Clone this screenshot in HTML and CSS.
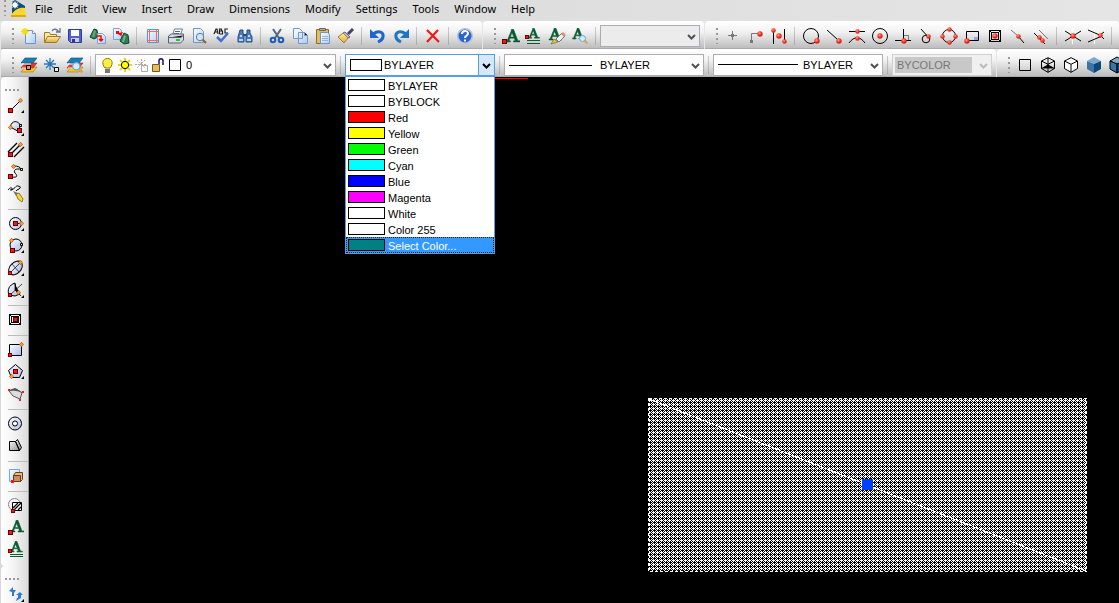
FILE: index.html
```html
<!DOCTYPE html>
<html lang="en">
<head>
<meta charset="utf-8">
<title>CAD drawing</title>
<link rel="stylesheet" href="styles.css">
</head>
<body>
<svg class="defs" aria-hidden="true">
  <defs>
    <radialGradient id="gBall" cx=".4" cy=".35"><stop offset="0" stop-color="#ffb0a0"/><stop offset=".5" stop-color="#ff4b3a"/><stop offset="1" stop-color="#e02010"/></radialGradient>
    <linearGradient id="gBlue" x2="1" y2="1"><stop offset="0" stop-color="#fff"/><stop offset="1" stop-color="#a9bbe8"/></linearGradient>
    <linearGradient id="gPage" x2="1" y2="1"><stop offset="0" stop-color="#fff"/><stop offset="1" stop-color="#a8cdf5"/></linearGradient>
    <linearGradient id="gGold" x2="0" y2="1"><stop offset="0" stop-color="#ffedab"/><stop offset="1" stop-color="#e3a73a"/></linearGradient>
    <linearGradient id="gGrey" x2="1" y2="1"><stop offset="0" stop-color="#fff"/><stop offset="1" stop-color="#888"/></linearGradient>
    <symbol id="ball" viewBox="0 0 6 6"><circle cx="3" cy="3" r="2.7" fill="url(#gBall)"/></symbol>
    <symbol id="node" viewBox="0 0 5 5"><path fill="#600" d="M0 0h5v5H0z"/><path fill="#f01818" d="M1 1h3v3H1z"/></symbol>
    <symbol id="gem" viewBox="0 0 5 5"><path fill="#ff9a2e" stroke="#8a4a00" stroke-width=".6" d="M2.500.3 4.700 2.500 2.500 4.700.3 2.500z"/></symbol>
    <symbol id="more" viewBox="0 0 4 4"><path d="M4 0v4H0z"/></symbol>
    <symbol id="letter" viewBox="0 0 14 13"><path fill="#075c30" stroke="#075c30" stroke-width=".5" d="M6 .3h2l4 10.700h2v1H8v-1h1.500L8.800 8.500H4.500L3.700 11H5v1H1v-1h1L5.700 2zM6.500 3.500 5 7.500h3.300z"/></symbol>
    <symbol id="lens" viewBox="0 0 9 9"><path stroke="#e69a50" stroke-width="2" d="m5.500 5.500 3 3"/><circle cx="3.500" cy="3.500" r="3" fill="#d3edff" stroke="#6da6d9"/></symbol>
    <symbol id="cube" viewBox="0 0 16 16"><path d="M8 .7 14.500 4v7.500L8 15.300 1.500 11.500V4z"/><path d="M1.500 4 8 7.300 14.500 4M8 7.300v8"/></symbol>
    <symbol id="caret" viewBox="0 0 9 6"><path fill="none" stroke="currentColor" stroke-width="2" d="m1 1 3.500 3.500L8 1"/></symbol>
    <symbol id="layers" viewBox="0 0 18 18"><path fill="#f3c623" stroke="#9a7a00" stroke-width=".6" d="M5 11h12l-4 5H1z"/><path fill="#e33" stroke="#922" stroke-width=".6" d="M5 7h12l-4 5H1z"/><path fill="#1580b5" stroke="#0b4a70" stroke-width=".6" d="M5 2h12l-4 5H1z"/><path stroke="#fff" d="M2 8h9M2 12h8"/></symbol>
  </defs>
</svg>

<nav class="menu" aria-label="Main menu">
  <span class="grip"></span>
  <svg class="logo" viewBox="0 0 17 18"><path fill="#0c4d7d" d="M2 2 5 0l10 6v8H2z"/><path fill="#fff" d="m5 1 1 2 2-1-1 2 2 1-2 1 1 2-2-1-1 2-1-2-2 1 1-2-2-1 2-1-1-2 2 1z"/><path fill="#ffd52e" d="M1 15C5 9 10 7 15 8l1 9H1z"/><path fill="#e6a700" d="M1 15h15v2H1z"/></svg>
  <button>File</button><button>Edit</button><button>View</button><button>Insert</button><button>Draw</button><button>Dimensions</button><button>Modify</button><button>Settings</button><button>Tools</button><button>Window</button><button>Help</button>
</nav>

<div class="bars">
  <div class="toolbar" role="toolbar" aria-label="Standard">
    <span class="grip"></span>
    <button class="tool" aria-label="New"><svg viewBox="0 0 18 18"><path fill="url(#gPage)" stroke="#6d94ce" d="M5.500 3.500h7l3 3v10h-10z"/><path fill="#fff" stroke="#6d94ce" d="M12.500 3.500v3h3"/><path stroke="#f3df00" stroke-width="1.500" d="M5 1v7M1 4.500h8M2.500 2l5 5m0-5-5 5"/></svg></button>
    <button class="tool" aria-label="Open"><svg viewBox="0 0 18 18"><path fill="#ffe9a0" stroke="#a07a2c" d="M1.500 15.500v-10h5l1 2h6v3"/><path fill="url(#gGold)" stroke="#a07a2c" d="m1.500 15.500 3-6h13l-4 6z"/><path fill="none" stroke="#64748c" stroke-width="1.300" d="M9 4c2-3 5-2 7 1M17 1v4h-4"/></svg></button>
    <button class="tool" aria-label="Save"><svg viewBox="0 0 18 18"><path fill="#5060d0" stroke="#2d3aa0" d="M2.500 2.500h13v13h-11l-2-2z"/><path fill="#fff" d="M5 3h8v6H5z"/><path fill="#c7cbef" d="M5 11h8v4H5z"/><path fill="#29368e" d="M6 12h3v3H6z"/></svg></button>
    <button class="tool" aria-label="Import"><svg viewBox="0 0 18 18"><path fill="#2d8050" stroke="#0b4528" d="m1 10 4-8 3 1 1 7-4 2z"/><path fill="#66a57e" d="m5 3 2 1-2 6H3z"/><path fill="url(#gPage)" stroke="#7ba2d8" d="M8.500 6.500h5l3 3v7h-8z"/><path stroke="#f00" fill="none" stroke-width="1.500" d="M7 9h5v5m-2-2 2 2 2-2"/></svg></button>
    <button class="tool" aria-label="Export"><svg viewBox="0 0 18 18"><path fill="url(#gPage)" stroke="#7ba2d8" d="M1.500 1.500h6l2 2v9h-8z"/><path fill="#2d8050" stroke="#0b4528" d="m8 14 4-8 4 2 1 8-5 1z"/><path fill="#78ad8c" d="m12 8 2 1-2 6h-2z"/><path fill="#f00" d="M4 4h3v2l4-1-2 4-3-2H4z"/></svg></button>
    <span class="sep"></span>
    <button class="tool" aria-label="Page setup"><svg viewBox="0 0 18 18"><path fill="url(#gPage)" stroke="#5c90cf" d="M3.500 2.500h11v13h-11z"/><path stroke="#f46a5b" d="M5.500 3v12M12.500 3v12M4 4.500h10M4 13.500h10"/></svg></button>
    <button class="tool" aria-label="Print"><svg viewBox="0 0 18 18"><path fill="#fff" stroke="#6c7d94" d="m5.500 8 2-6h8l-2 6z"/><path fill="#d8dce2" stroke="#566273" d="m1.500 9 3-2h12v6l-3 3h-12z"/><path stroke="#566273" d="M2 10.500h12l2-2M8 4.500h5M7 6.500h5"/><path fill="#22c838" d="M9 12h4v2H9z"/></svg></button>
    <button class="tool" aria-label="Print preview"><svg viewBox="0 0 18 18"><path fill="url(#gPage)" stroke="#7c95b4" d="M3.500 1.500h7l3 3v11h-10z"/><path stroke="#8a6034" stroke-width="2" d="m12 12 4 4"/><circle cx="10" cy="10" r="3.700" fill="#c5e8ff" stroke="#697a8a"/></svg></button>
    <button class="tool" aria-label="Spelling"><svg viewBox="0 0 18 18"><path fill="none" stroke="#222" stroke-width="1.200" d="m1 7 2-5h1l1 5M2 5h3M6.500 7V2h2v2h-2 3v3h-3M15 2h-3v4h3"/><path fill="none" stroke="#3f70cd" stroke-width="2.500" d="m4 10 4 4 7-8"/></svg></button>
    <button class="tool" aria-label="Find"><svg viewBox="0 0 18 18"><path fill="#4d7bb8" stroke="#234f8c" d="M4 3h3v3l1 2v7H2v-5zM11 3h3v3l2 4v5h-6V8l1-2z"/><path fill="#b9d5f2" d="M4 8h2v2H4zM12 8h2v2h-2zM3 12h4v2H3zM11 12h4v2h-4z"/><path stroke="#234f8c" stroke-width="2" d="M7 8h4"/></svg></button>
    <span class="sep"></span>
    <button class="tool" aria-label="Cut"><svg viewBox="0 0 18 18"><path stroke="#53677f" stroke-width="2" d="m5 2 6 9M13 2 7 11"/><circle cx="5" cy="13" r="2.300" fill="none" stroke="#1e5bb8" stroke-width="2"/><circle cx="13" cy="13" r="2.300" fill="none" stroke="#1e5bb8" stroke-width="2"/></svg></button>
    <button class="tool" aria-label="Copy"><svg viewBox="0 0 18 18"><path fill="url(#gPage)" stroke="#7598c8" d="M2.500 1.500h6l3 3v7h-9zM7.500 5.500h6l3 3v8h-9z"/><path stroke="#7598c8" d="M13.500 5.500v3h3"/></svg></button>
    <button class="tool" aria-label="Paste"><svg viewBox="0 0 18 18"><path fill="#e2bd64" stroke="#8a6d2d" d="M2.500 2.500h12v14h-12z"/><path fill="#aab0b8" stroke="#666" d="M5.500 1.500h6v2h-6z"/><path fill="url(#gPage)" stroke="#6f94c7" d="M6.500 5.500h7l2 2v9h-9z"/><path stroke="#9ab5d8" d="M8 9.500h6M8 11.500h6M8 13.500h6"/></svg></button>
    <button class="tool" aria-label="Match properties"><svg viewBox="0 0 18 18"><path stroke="#4a3f68" stroke-width="3" d="m11 7 5-5"/><path fill="#b9bfc9" stroke="#5f6673" d="m8 5 5 5-2 1-5-5z"/><path fill="url(#gGold)" stroke="#a38225" d="m6 6 5 5-4 5-6-6z"/></svg></button>
    <span class="sep"></span>
    <button class="tool" aria-label="Undo"><svg viewBox="0 0 18 18"><path fill="none" stroke="#1d66cc" stroke-width="3" d="M4 7c6-4 11-2 10 3-.4 3-3 4-5 5"/><path fill="#1d66cc" d="M1 2v9h9z"/></svg></button>
    <button class="tool" aria-label="Redo"><svg viewBox="0 0 18 18"><path fill="none" stroke="#1d75c5" stroke-width="3" d="M14 7C8 3 3 5 4 10c.4 3 3 4 5 5"/><path fill="#1d75c5" d="M17 2v9H8z"/></svg></button>
    <span class="sep"></span>
    <button class="tool" aria-label="Delete"><svg viewBox="0 0 18 18"><path fill="none" stroke="#f01818" stroke-width="2.200" d="m3 3 12 12M14 3 3 15"/></svg></button>
    <span class="sep"></span>
    <button class="tool" aria-label="Help"><svg viewBox="0 0 18 18"><circle cx="9" cy="9" r="7.300" fill="#2b63cf" stroke="#b8c4d8" stroke-width="1.600"/><path fill="none" stroke="#fff" stroke-width="2" d="M6 7c0-4 6-4 6-.5C12 8.500 9 8.500 9 11M9 12.500v2"/></svg></button>
  </div>
  <div class="toolbar" role="toolbar" aria-label="Text">
    <span class="grip"></span>
    <button class="tool" aria-label="Text"><svg viewBox="0 0 18 18"><use href="#letter" x="3" y="2" width="15" height="14"/><use href="#node" x="0" y="12" width="5" height="5"/></svg></button>
    <button class="tool" aria-label="Multiline text"><svg viewBox="0 0 18 18"><use href="#letter" x="2" y="1" width="13" height="11"/><use href="#node" x="0" y="8" width="4" height="4"/><path stroke="#075c30" d="M2 13.500h13M2 16.500h13"/></svg></button>
    <button class="tool" aria-label="Edit text"><svg viewBox="0 0 18 18"><use href="#letter" x="0" y="1" width="14" height="13"/><path fill="#eee" stroke="#777" d="m8 12 6-6 3 3-6 6z"/><path fill="#e48a7a" d="m13 7 2-2 3 3-2 2z"/><path fill="#f0c51c" stroke="#555" stroke-width=".6" d="m3 17 3-5 4 3z"/></svg></button>
    <button class="tool" aria-label="Find text"><svg viewBox="0 0 18 18"><use href="#letter" x="0" y="1" width="14" height="12"/><use href="#lens" x="8" y="8" width="9" height="9"/></svg></button>
    <span class="sep"></span>
    <div class="combo style-box"><select aria-label="Text style"><option></option></select><svg class="caret"><use href="#caret"/></svg></div>
  </div>
  <div class="toolbar grow" role="toolbar" aria-label="Entity snap">
    <span class="grip"></span>
    <button class="tool" aria-label="Track point"><svg viewBox="0 0 18 18"><path stroke="#777" d="M8.500 4v9M4 8.500h9"/><path fill="#777" d="M7 7h3v3H7z"/></svg></button>
    <button class="tool" aria-label="From point"><svg viewBox="0 0 18 18"><path fill="none" stroke="#777" d="M4.500 14V6.500H12"/><path fill="#777" d="M3 13h3v3H3z"/><use href="#ball" x="10" y="4" width="6" height="6"/></svg></button>
    <button class="tool" aria-label="Mid between points"><svg viewBox="0 0 18 18"><path stroke="#000" d="M3.500 3v14M14.500 2v12"/><use href="#ball" x="1" y="1" width="5" height="5"/><use href="#ball" x="6" y="6" width="6" height="6"/><use href="#ball" x="12" y="12" width="5" height="5"/></svg></button>
    <span class="sep"></span>
    <button class="tool" aria-label="Nearest"><svg viewBox="0 0 18 18"><circle cx="9" cy="9" r="7.500" fill="none" stroke="#000"/><use href="#ball" x="12" y="11" width="6" height="6"/></svg></button>
    <button class="tool" aria-label="Endpoint"><svg viewBox="0 0 18 18"><path stroke="#000" d="m2 3 10 9"/><use href="#ball" x="11" y="11" width="6" height="6"/></svg></button>
    <button class="tool" aria-label="Midpoint"><svg viewBox="0 0 18 18"><path fill="none" stroke="#000" d="M1 4.500h16M1 16C6 9 12 9 17 16"/><use href="#ball" x="7" y="2" width="5" height="5"/><use href="#ball" x="7" y="9" width="5" height="5"/></svg></button>
    <button class="tool" aria-label="Center"><svg viewBox="0 0 18 18"><circle cx="9" cy="9" r="7.500" fill="none" stroke="#000"/><use href="#ball" x="6" y="6" width="6" height="6"/></svg></button>
    <button class="tool" aria-label="Perpendicular"><svg viewBox="0 0 18 18"><path fill="none" stroke="#777" d="M10 8.500h4.500V13"/><path stroke="#000" d="M9.500 2v12M1 13.500h16"/><use href="#ball" x="7" y="11" width="6" height="6"/></svg></button>
    <button class="tool" aria-label="Tangent"><svg viewBox="0 0 18 18"><path stroke="#000" d="m4 2 9 10"/><circle cx="9" cy="12" r="3.800" fill="none" stroke="#000"/><use href="#ball" x="9" y="7" width="5" height="5"/></svg></button>
    <button class="tool" aria-label="Quadrant"><svg viewBox="0 0 18 18"><circle cx="9" cy="9" r="6.500" fill="none" stroke="#000"/><use href="#ball" x="7" y="0" width="5" height="5"/><use href="#ball" x="0" y="7" width="5" height="5"/><use href="#ball" x="13" y="7" width="5" height="5"/><use href="#ball" x="7" y="13" width="5" height="5"/></svg></button>
    <button class="tool" aria-label="Insertion"><svg viewBox="0 0 18 18"><path fill="none" stroke="#000" d="M3.500 12V4.500h12v9H6"/><path fill="#99a7e8" d="M11 10h4v3h-4z"/><use href="#ball" x="1" y="11" width="6" height="6"/></svg></button>
    <button class="tool" aria-label="Node"><svg viewBox="0 0 18 18"><path fill="none" stroke="#000" d="M3.500 3.500h11v11h-11zM5.500 5.500h7v7h-7zM3 3l3 3m9-3-3 3M3 15l3-3m9 3-3-3"/><use href="#ball" x="6" y="6" width="6" height="6"/></svg></button>
    <button class="tool" aria-label="On line"><svg viewBox="0 0 18 18"><path stroke="#777" d="m2 3 7 6"/><path stroke="#000" d="m9 9 6 7"/><use href="#ball" x="7" y="7" width="5" height="5"/></svg></button>
    <button class="tool" aria-label="Parallel"><svg viewBox="0 0 18 18"><path stroke="#777" d="m7 3 9 9"/><path stroke="#000" d="m2 6 11 11"/><use href="#ball" x="5" y="8" width="5" height="5"/><use href="#ball" x="8" y="11" width="5" height="5"/></svg></button>
    <span class="sep"></span>
    <button class="tool" aria-label="Intersection"><svg viewBox="0 0 18 18"><path stroke="#fff" d="M8.500 1v16"/><path stroke="#000" d="m1 4 16 10M1 14 17 4"/><use href="#ball" x="6" y="6" width="6" height="6"/></svg></button>
    <button class="tool" aria-label="Apparent intersection"><svg viewBox="0 0 18 18"><path stroke="#fff" d="M7.500 1v16"/><path stroke="#000" fill="none" d="m1 3 14 6-14 6M17 12l-4-4 4-3"/><use href="#ball" x="11" y="6" width="5" height="5"/></svg></button>
    <span class="sep"></span>
  </div>
</div>

<div class="bars lower">
  <div class="toolbar" role="toolbar" aria-label="Entity properties">
    <span class="grip"></span>
    <button class="tool" aria-label="Layers"><svg viewBox="0 0 18 18"><use href="#layers"/><path fill="#e88" stroke="#000" d="M6.500 9.500h4v4h-4z"/></svg></button>
    <button class="tool" aria-label="Freeze layer"><svg viewBox="0 0 18 18"><path stroke="#2878b8" stroke-width="1.300" d="M7 2v12M1 8h12M3 4l8 8m0-8-8 8"/><path fill="#e6f3fc" stroke="#000" d="M11.500 11.500h4v4h-4z"/></svg></button>
    <button class="tool" aria-label="Layer explorer"><svg viewBox="0 0 18 18"><use href="#layers"/><use href="#lens" x="6" y="6" width="11" height="11"/></svg></button>
    <span class="sep"></span>
    <div class="combo layer-box">
      <select aria-label="Layer"><option>0</option></select>
      <svg class="inset states" viewBox="0 0 80 18"><path fill="#ffee42" stroke="#8b7c00" d="M4 12C0 7 2 2.500 6.500 2.500S13 7 9 12z"/><path fill="#777" d="M4 13h5v4H4z"/><circle cx="24" cy="9" r="3.700" fill="#ff0" stroke="#000"/><path stroke="#e8d800" stroke-width="2" d="M24 2v3M24 13v3M17 9h3M28 9h3M19 4l2 2m8-2-2 2m-8 8 2-2m8 2-2-2"/><path fill="none" stroke="#aaa" stroke-dasharray="2 1" d="M34 8.500h12M40.500 3v12M36 4l8 8m0-8-8 8"/><path fill="none" stroke="#aaa" d="M40.500 9.500h6v6h-6z"/><path fill="#e5bd5b" stroke="#735b20" d="M51.500 8.500h7v7h-7z"/><path fill="none" stroke="#14146c" stroke-width="1.500" d="M58 8V5c0-3 4-3 4 0v4"/><path fill="#fff" stroke="#000" d="M68.500 3.500h11v11h-11z"/></svg>
      <svg class="caret"><use href="#caret"/></svg>
    </div>
    <span class="sep"></span>
    <div class="combo color-box">
      <select aria-label="Color"><option>BYLAYER</option></select>
      <span class="inset swatch"></span>
      <span class="drop"><svg class="caret"><use href="#caret"/></svg></span>
      <ul class="popup" role="listbox" aria-label="Color list">
        <li role="option"><span class="chip"></span>BYLAYER</li>
        <li role="option"><span class="chip"></span>BYBLOCK</li>
        <li role="option"><span class="chip red"></span>Red</li>
        <li role="option"><span class="chip yellow"></span>Yellow</li>
        <li role="option"><span class="chip green"></span>Green</li>
        <li role="option"><span class="chip cyan"></span>Cyan</li>
        <li role="option"><span class="chip blue"></span>Blue</li>
        <li role="option"><span class="chip magenta"></span>Magenta</li>
        <li role="option"><span class="chip"></span>White</li>
        <li role="option"><span class="chip"></span>Color 255</li>
        <li role="option" class="active" aria-selected="true"><span class="chip teal"></span>Select Color...</li>
      </ul>
    </div>
    <span class="sep"></span>
    <div class="combo line-box"><select aria-label="Linetype"><option>BYLAYER</option></select><span class="inset stroke"></span><svg class="caret"><use href="#caret"/></svg></div>
    <span class="sep"></span>
    <div class="combo weight-box"><select aria-label="Lineweight"><option>BYLAYER</option></select><span class="inset stroke"></span><svg class="caret"><use href="#caret"/></svg></div>
    <span class="sep"></span>
    <div class="combo print-box"><select aria-label="Print style" disabled><option>BYCOLOR</option></select><svg class="caret"><use href="#caret"/></svg></div>
  </div>
  <div class="toolbar grow" role="toolbar" aria-label="Shade">
    <span class="grip"></span>
    <button class="tool" aria-label="2D wireframe"><svg viewBox="0 0 18 18"><path fill="none" stroke="#000" d="M3.500 3.500h11v11h-11z"/></svg></button>
    <button class="tool" aria-label="3D wireframe"><svg viewBox="0 0 18 18"><use href="#cube" x="1" y="1" width="16" height="16" fill="none" stroke="#000"/><path stroke="#000" d="M9 2v7M2.500 12.500 9 9l6.500 3.500"/></svg></button>
    <button class="tool" aria-label="Hidden"><svg viewBox="0 0 18 18"><use href="#cube" x="1" y="1" width="16" height="16" fill="#fff" stroke="#000"/></svg></button>
    <button class="tool" aria-label="Flat shading"><svg viewBox="0 0 18 18"><path fill="#7fa9c9" d="m9 1 7 4-7 3-7-3z"/><path fill="#3874a6" d="m2 5 7 3v9l-7-4z"/><path fill="#0c4778" d="m16 5-7 3v9l7-4z"/></svg></button>
    <button class="tool" aria-label="Flat shading with edges"><svg viewBox="0 0 18 18"><path fill="#7fa9c9" stroke="#000" d="m9 1 7 4-7 3-7-3z"/><path fill="#3874a6" stroke="#000" d="m2 5 7 3v9l-7-4z"/><path fill="#0c4778" stroke="#000" d="m16 5-7 3v9l7-4z"/></svg></button>
  </div>
</div>

<main class="work">
  <aside class="side">
    <div class="rail" role="toolbar" aria-label="Draw" aria-orientation="vertical">
      <span class="grip wide"></span>
      <button class="tool" aria-label="Line"><svg viewBox="0 0 18 18"><path stroke="#000" d="m4 13 9-9"/><use href="#node" x="1" y="11" width="5" height="5"/><use href="#gem" x="11" y="1" width="5" height="5"/><use href="#more" x="14" y="13" width="3" height="3"/></svg></button>
      <button class="tool" aria-label="Arc"><svg viewBox="0 0 18 18"><path fill="url(#gBlue)" stroke="#000" d="M3.500 8C4 1 12 1 13.500 7l-3 5z"/><use href="#gem" x="1" y="6" width="5" height="5"/><use href="#node" x="10" y="9" width="5" height="5"/><path fill="#ff0" stroke="#000" d="M12.500 5.500h2v2h-2z"/><use href="#more" x="14" y="14" width="3" height="3"/></svg></button>
      <button class="tool" aria-label="Double line"><svg viewBox="0 0 18 18"><path stroke="#000" stroke-width="1.300" d="M1 11 10 2M3 14 13 4M7 16 17 6"/><use href="#node" x="1" y="11" width="5" height="5"/><use href="#gem" x="11" y="1" width="5" height="5"/></svg></button>
      <button class="tool" aria-label="Polyline"><svg viewBox="0 0 18 18"><path fill="none" stroke="#000" d="M4 14c8 1 6-2 4-4-2-3 1-4 3-4h4M7 3c4 0 6 1 7 3"/><use href="#node" x="1" y="11" width="5" height="5"/><use href="#gem" x="4" y="1" width="5" height="5"/><path fill="#ff0" stroke="#000" d="M13.500 5.500h2v2h-2z"/></svg></button>
      <button class="tool" aria-label="Freehand"><svg viewBox="0 0 18 18"><path fill="none" stroke="#000" d="M1 5c4-5 6 0 2 0M4 5c3 0 5-5 7-4s3 0 2 2-3 1-4 3"/><path fill="#f6d840" stroke="#9a7808" d="m9 9 3-1 4 6-1 3-4-3z"/><path fill="#777" d="m6 6 5 2-2 3z"/></svg></button>
      <span class="rule"></span>
      <button class="tool" aria-label="Circle"><svg viewBox="0 0 18 18"><circle cx="8.500" cy="8.500" r="6" fill="url(#gBlue)" stroke="#000"/><path stroke="#000" d="M9 8.500h5"/><use href="#node" x="6" y="6" width="5" height="5"/><use href="#gem" x="12" y="6" width="5" height="5"/><use href="#more" x="14" y="13" width="3" height="3"/></svg></button>
      <button class="tool" aria-label="Circular arc"><svg viewBox="0 0 18 18"><circle cx="9" cy="8" r="6" fill="url(#gBlue)" stroke="#000"/><use href="#gem" x="2" y="1" width="5" height="5"/><use href="#node" x="3" y="11" width="5" height="5"/><path fill="#ff0" stroke="#000" d="M13.500 6.500h2v2h-2z"/><use href="#more" x="14" y="13" width="3" height="3"/></svg></button>
      <button class="tool" aria-label="Ellipse"><svg viewBox="0 0 18 18"><ellipse cx="8.500" cy="9" rx="8" ry="5.500" transform="rotate(-45 8.500 9)" fill="url(#gBlue)" stroke="#000"/><path stroke="#000" stroke-width=".7" d="m3 14 10-10M5 5l7 8"/><use href="#node" x="1" y="12" width="4" height="4"/><use href="#gem" x="11" y="1" width="5" height="5"/><use href="#more" x="14" y="14" width="3" height="3"/></svg></button>
      <button class="tool" aria-label="Elliptical arc"><svg viewBox="0 0 18 18"><path fill="url(#gBlue)" stroke="#000" d="M8 2C2 4 0 9 2 14l6 1 5-2-4-4z"/><path stroke="#000" stroke-width=".7" d="m3 14 12-11M8 3v6l6 6"/><use href="#node" x="1" y="12" width="4" height="4"/><use href="#gem" x="9" y="9" width="5" height="5"/><use href="#more" x="14" y="14" width="3" height="3"/></svg></button>
      <span class="rule"></span>
      <button class="tool" aria-label="Point"><svg viewBox="0 0 18 18"><path fill="#fff" stroke="#000" d="M2.500 3.500h11v10h-11z"/><path fill="none" stroke="#000" d="M4.500 5.500h7v6h-7zM2 3l3 3m9-3-3 3M2 14l3-3m9 3-3-3"/><use href="#node" x="6" y="6" width="5" height="5"/></svg></button>
      <span class="rule"></span>
      <button class="tool" aria-label="Rectangle"><svg viewBox="0 0 18 18"><path fill="url(#gBlue)" stroke="#000" d="M2.500 3.500h12v11h-12z"/><use href="#node" x="1" y="12" width="4" height="4"/><use href="#gem" x="12" y="1" width="5" height="5"/></svg></button>
      <button class="tool" aria-label="Polygon"><svg viewBox="0 0 18 18"><path fill="url(#gBlue)" stroke="#000" d="m8.500 1.500 7 6-3 7h-8l-3-7z"/><use href="#node" x="6" y="6" width="5" height="5"/><use href="#gem" x="2" y="11" width="5" height="5"/><use href="#more" x="14" y="13" width="3" height="3"/></svg></button>
      <button class="tool" aria-label="Boundary"><svg viewBox="0 0 18 18"><path fill="#ddd" stroke="#555" d="m2 6 4 5 7 3 2-6-6-4z"/><path fill="#555" d="m2 5 6-2 7 4-6-1z"/><path fill="#f02020" d="M1 4h2v2H1zM15 6h2v2h-2zM12 14h2v2h-2z"/></svg></button>
      <span class="rule"></span>
      <button class="tool" aria-label="Donut"><svg viewBox="0 0 18 18"><circle cx="8" cy="8.500" r="6.500" fill="url(#gBlue)" stroke="#000"/><circle cx="8" cy="8.500" r="2.500" fill="#fff" stroke="#000"/></svg></button>
      <button class="tool" aria-label="Plane"><svg viewBox="0 0 18 18"><path fill="url(#gGrey)" stroke="#000" d="M2.500 4.500h6l4 9h-10zM8.500 4.500l2-2 4 8-2 3z"/></svg></button>
      <span class="rule"></span>
      <button class="tool" aria-label="Insert block"><svg viewBox="0 0 18 18"><path fill="url(#gPage)" stroke="#7aa2e0" d="M2.500 2.500h10v12h-10z"/><path fill="#e8b987" stroke="#6d3c17" d="M6.500 8.500l2-3h7v7l-2 2h-7z"/><path fill="#ca8e5b" stroke="#6d3c17" d="M6.500 8.500h7v6h-7z"/><path fill="#f01818" d="M4 13h3v3H4z"/></svg></button>
      <span class="rule"></span>
      <button class="tool" aria-label="Hatch"><svg viewBox="0 0 18 18"><circle cx="7.500" cy="7.500" r="6" fill="#f5f5f5" stroke="#888"/><path fill="#fff" stroke="#000" d="M5.500 5.500h9v8h-9z"/><path stroke="#000" stroke-width="1.300" d="m6 11 5-5M7 13l7-7M11 13l3-3"/><use href="#node" x="4" y="12" width="4" height="4"/></svg></button>
      <button class="tool" aria-label="Single-line text"><svg viewBox="0 0 18 18"><use href="#letter" x="3" y="1" width="14" height="13"/><use href="#node" x="1" y="11" width="5" height="5"/></svg></button>
      <button class="tool" aria-label="Paragraph text"><svg viewBox="0 0 18 18"><use href="#letter" x="2" y="0" width="14" height="12"/><use href="#node" x="1" y="8" width="4" height="4"/><path stroke="#075c30" d="M3 13.500h13M3 15.500h13"/></svg></button>
    </div>
    <div class="rail last" role="toolbar" aria-label="View" aria-orientation="vertical">
      <span class="grip wide"></span>
      <button class="tool" aria-label="Rotate view"><svg viewBox="0 0 18 18"><path fill="#2b7dd0" d="m2 5 4-4v3h3L7 7v3H5V6zM9 9l4-3 3 3h-2v3l-5 3 1-3h1V9z"/><use href="#more" x="14" y="13" width="3" height="3"/></svg></button>
    </div>
  </aside>
  <section class="canvas" aria-label="Drawing">
    <span class="red-line"></span>
    <svg class="hatch" viewBox="0 0 439 174" shape-rendering="crispEdges">
      <defs><pattern id="dots" width="4" height="4" patternUnits="userSpaceOnUse"><path fill="#fff" d="M0 0h1v1H0zM1 1h1v1H1zM3 1h1v1H3zM0 2h3v1H0zM1 3h1v1H1zM3 3h1v1H3z"/></pattern></defs>
      <path fill="url(#dots)" d="M0 0h439v174H0z"/>
      <path fill="none" stroke="#000" d="M.5.5h438v173H.5z"/>
      <path fill="none" stroke="#fff" stroke-dasharray="3 2" d="M.5.5h438v173H.5z"/>
      <path stroke="#fff" d="m1 1 437 172"/>
      <path fill="#0040ff" d="M214 81h11v11h-11z"/>
    </svg>
  </section>
</main>
</body>
</html>
```
FILE: styles.css
```css
* { box-sizing: border-box; }
html, body { height: 100%; }
body {
  margin: 0;
  display: flex;
  flex-direction: column;
  overflow: hidden;
  background: #000;
  color: #000;
  font: 11px/16px "Liberation Sans", Arial, sans-serif;
}
.defs { position: absolute; width: 0; height: 0; }
button {
  border: 0;
  padding: 0;
  background: none;
  color: inherit;
  font: inherit;
}

.menu {
  display: flex;
  flex: none;
  gap: 1px;
  height: 21px;
  padding-left: 4px;
  background: linear-gradient(90deg, #d8d8d8, #e5e5e5);
  font: 11px/18px "Noto Sans", "Open Sans", sans-serif;
}
.menu button { padding: 0 7px; height: 18px; white-space: nowrap; }
.logo { width: 17px; height: 18px; margin-left: 3px; }

.grip {
  flex: none;
  width: 2px;
  height: 16px;
  background: repeating-linear-gradient(#999 0 2px, transparent 2px 5px);
}
.bars { display: flex; flex: none; gap: 1px; padding-left: 1px; background: #e6e6e6; }
.toolbar {
  display: flex;
  flex: none;
  align-items: center;
  height: 28px;
  padding: 2px 4px 0 11px;
  border-radius: 4px 4px 0 0;
  border-bottom: 1px solid #aaa;
  background: linear-gradient(#fff, #f2f2f2 40%, #bdbdbd);
}
.toolbar:first-child { padding-right: 6px; }
.toolbar > .grip { margin-right: 3px; }
.lower .toolbar { padding-top: 5px; }
.lower .toolbar:first-child { padding-right: 4px; }
.toolbar.grow { flex: 1 0 0; min-width: 0; overflow: hidden; }
.tool {
  display: flex;
  flex: none;
  align-items: center;
  width: 23px;
  height: 22px;
  padding-left: 3px;
}
.tool svg { flex: none; width: 18px; height: 18px; }
.sep { flex: none; width: 9px; height: 18px; background: linear-gradient(#ccc, #aaa) no-repeat 4px 0 / 1px 100%; }

.combo { position: relative; flex: none; height: 22px; }
.combo select {
  display: block;
  appearance: none;
  width: 100%;
  height: 100%;
  margin: 0;
  padding: 0 18px 0 4px;
  border: 1px solid #abadb3;
  border-radius: 0;
  background: #fff;
  color: #000;
  font: 11px/16px "Liberation Sans", Arial, sans-serif;
}
.caret {
  position: absolute;
  top: 9px;
  right: 4px;
  width: 9px;
  height: 6px;
  color: #505050;
  pointer-events: none;
}
.inset { position: absolute; pointer-events: none; }
.style-box { width: 100px; }
.style-box select { background: #ececec; }
.layer-box { width: 241px; }
.layer-box select { padding-left: 90px; }
.states { left: 6px; top: 2px; width: 80px; height: 18px; }
.color-box { width: 150px; }
.color-box select { padding-left: 38px; border-color: #569de5; }
.swatch { left: 5px; top: 5px; width: 32px; height: 12px; border: 1px solid #000; }
.drop {
  position: absolute;
  top: 0;
  right: 0;
  width: 17px;
  height: 22px;
  border: 1px solid #569de5;
  background: #d6e9fc;
  pointer-events: none;
}
.drop .caret { top: 8px; right: 3px; color: #000; }
.line-box { width: 200px; }
.line-box select { padding-left: 95px; }
.stroke { left: 5px; top: 11px; width: 83px; border-top: 1px solid #000; }
.weight-box { width: 170px; }
.weight-box select { padding-left: 89px; }
.weight-box .stroke { width: 80px; top: 10px; }
.print-box { width: 100px; }
.print-box select {
  border-color: #d0d0d0;
  background: linear-gradient(#c8c8c8, #c8c8c8) no-repeat 2px 2px / 77px 16px #f0f0f0;
  color: #777;
  opacity: 1;
}
.print-box .caret { color: #bbb; }

.popup {
  position: absolute;
  z-index: 2;
  top: 22px;
  left: 0;
  width: 100%;
  margin: 0;
  padding: 0;
  border: 1px solid #569de5;
  background: #fff;
  list-style: none;
  line-height: 18px;
}
.popup li { display: flex; align-items: flex-start; gap: 3px; height: 16px; padding: 0 2px; }
.chip { width: 37px; height: 12px; margin-top: 2px; border: 1px solid #000; background: #fff; }
.red { background: #f00; }
.yellow { background: #ff0; }
.green { background: #0f0; }
.cyan { background: #0ff; }
.blue { background: #00f; }
.magenta { background: #f0f; }
.teal { background: #008080; }
.popup .active { background: #3399ff; color: #fff; outline: 1px dotted #222; outline-offset: -1px; }

.work { display: flex; flex: 1; min-height: 0; background: #000; }
.side {
  display: flex;
  flex: none;
  flex-direction: column;
  width: 29px;
  overflow: hidden;
  border-right: 1px solid #999;
  background: #d8d8d8;
}
.rail {
  display: flex;
  flex: none;
  flex-direction: column;
  align-items: center;
  margin-left: 1px;
  padding: 12px 0 5px 2px;
  border-radius: 4px 0 0 4px;
  background: linear-gradient(90deg, #fff, #f6f6f6 40%, #dcdcdc);
}
.rail.last { flex: 1 0 auto; }
.wide { width: 16px; height: 2px; margin: 0 6px 4px 0; background: repeating-linear-gradient(90deg, #999 0 2px, transparent 2px 4px); }
.rule { flex: none; align-self: flex-end; width: 20px; height: 8px; background: linear-gradient(#bbb, #bbb) no-repeat 0 4px / 100% 1px; }

.canvas { position: relative; flex: 1; overflow: hidden; background: #000; }
.red-line { position: absolute; left: 466px; top: 1px; width: 33px; border-top: 1px solid #f00; }
.hatch { position: absolute; left: 619px; top: 321px; width: 439px; height: 174px; }
```
